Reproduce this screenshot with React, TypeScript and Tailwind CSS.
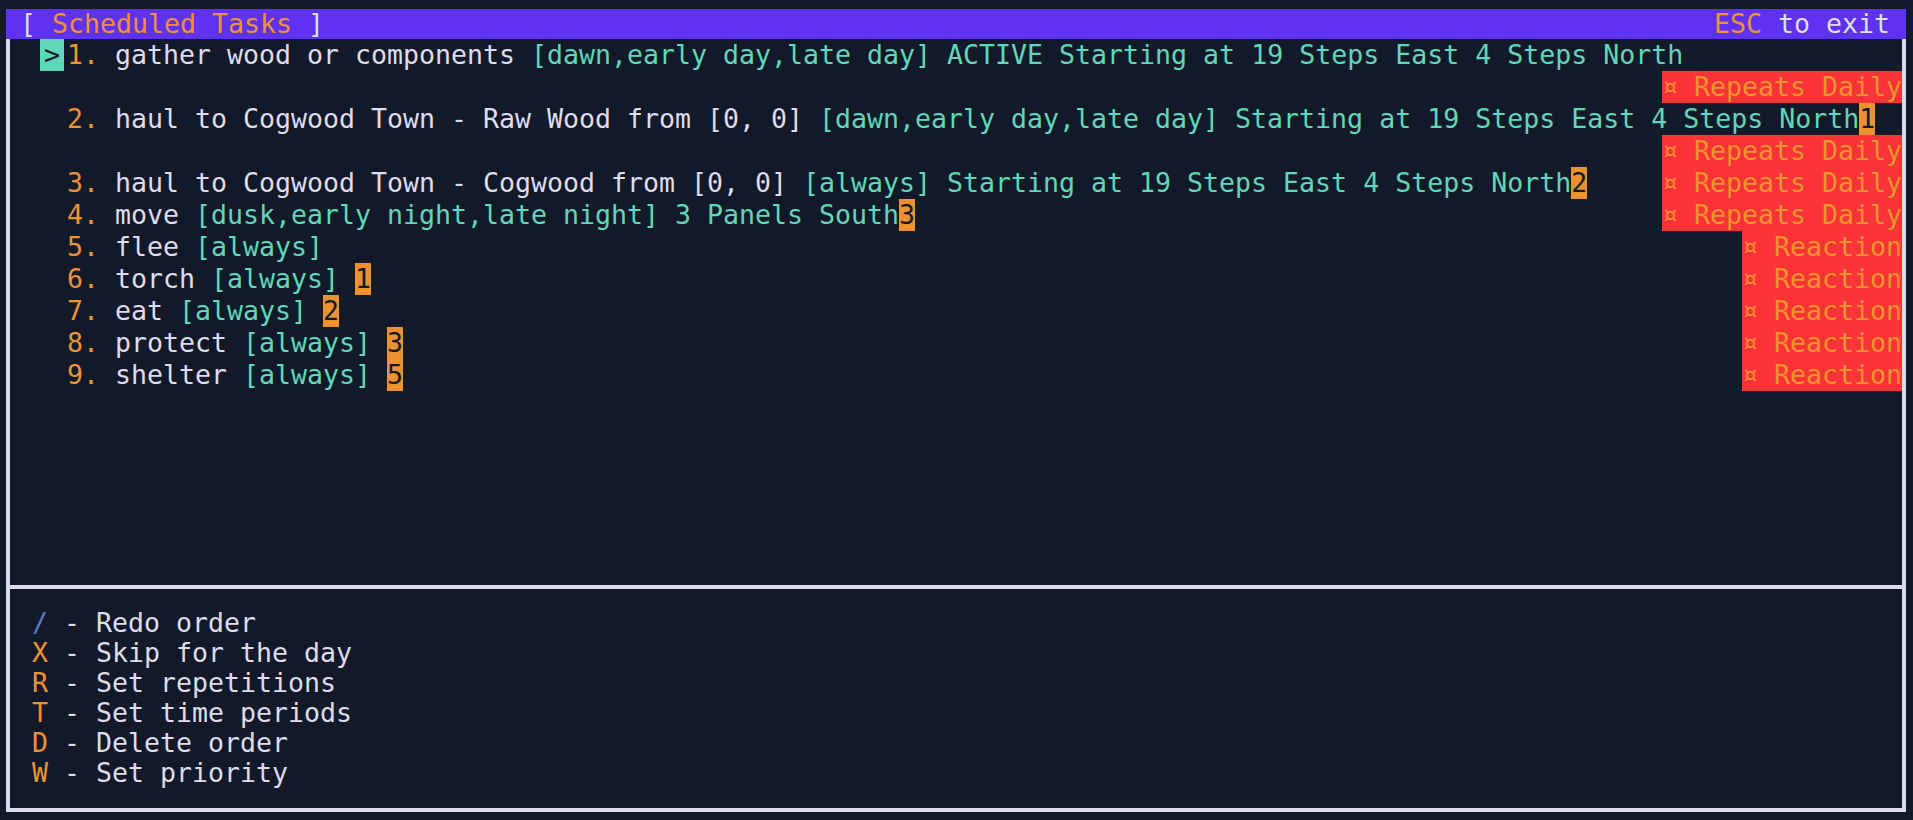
const FG = 'text-[#dedcef]'

function Num({ n }: { n: number }) {
  return <span className="text-[#f0922f]">{`${n}. `}</span>
}

function Teal({ children }: { children: React.ReactNode }) {
  return <span className="text-[#5ed8b9]">{children}</span>
}

function Badge({ n }: { n: number }) {
  return <span className="bg-[#ee9230] text-[#121a2a]">{n}</span>
}

function Tag({ label }: { label: string }) {
  return <span className="ml-auto bg-[#fc3438] text-[#f0922f]">{'¤ ' + label}</span>
}

function Row({ children, indent = true }: { children?: React.ReactNode; indent?: boolean }) {
  return (
    <div className={`flex h-[32px] leading-[32px] whitespace-pre ${indent ? 'pl-[57px]' : ''}`}>{children}</div>
  )
}

const tasks = [
  { n: 5, name: 'flee', badge: null as number | null },
  { n: 6, name: 'torch', badge: 1 },
  { n: 7, name: 'eat', badge: 2 },
  { n: 8, name: 'protect', badge: 3 },
  { n: 9, name: 'shelter', badge: 5 },
]

const keys = [
  { k: '/', label: 'Redo order', blue: true },
  { k: 'X', label: 'Skip for the day' },
  { k: 'R', label: 'Set repetitions' },
  { k: 'T', label: 'Set time periods' },
  { k: 'D', label: 'Delete order' },
  { k: 'W', label: 'Set priority' },
]

export default function App() {
  return (
    <div className={`w-[1913px] h-[820px] overflow-hidden bg-[#121a2a] pt-[9px] pl-[6px] font-['DejaVu_Sans_Mono',monospace] text-[26.58px] ${FG}`}>
      <div className="w-[1900px] flex flex-col">
        {/* title bar */}
        <div className="h-[30px] leading-[30px] bg-[#5e32f0] flex justify-between pl-[14px] pr-[16px] whitespace-pre">
          <span>
            [ <span className="text-[#f0922f]">Scheduled Tasks</span> ]
          </span>
          <span>
            <span className="text-[#f0922f]">ESC</span> to exit
          </span>
        </div>

        <div className="border-x-4 border-b-4 border-[#dcdbeb]">
          {/* task list */}
          <div className="h-[550px] border-b-4 border-[#dcdbeb]">
            <Row indent={false}>
              <span className="ml-[30px] mr-[3px] w-[24px] bg-[#5ed8b9] text-[#121a2a] text-center">{'>'}</span>
              <Num n={1} />
              <span>gather wood or components </span>
              <Teal>[dawn,early day,late day] ACTIVE Starting at 19 Steps East 4 Steps North</Teal>
            </Row>
            <Row>
              <Tag label="Repeats Daily" />
            </Row>
            <Row>
              <Num n={2} />
              <span>haul to Cogwood Town - Raw Wood from [0, 0] </span>
              <Teal>[dawn,early day,late day] Starting at 19 Steps East 4 Steps North</Teal>
              <Badge n={1} />
            </Row>
            <Row>
              <Tag label="Repeats Daily" />
            </Row>
            <Row>
              <Num n={3} />
              <span>haul to Cogwood Town - Cogwood from [0, 0] </span>
              <Teal>[always] Starting at 19 Steps East 4 Steps North</Teal>
              <Badge n={2} />
              <Tag label="Repeats Daily" />
            </Row>
            <Row>
              <Num n={4} />
              <span>move </span>
              <Teal>[dusk,early night,late night] 3 Panels South</Teal>
              <Badge n={3} />
              <Tag label="Repeats Daily" />
            </Row>
            {tasks.map((t) => (
              <Row key={t.n}>
                <Num n={t.n} />
                <span>{t.name} </span>
                <Teal>[always]</Teal>
                {t.badge !== null && (
                  <>
                    <span> </span>
                    <Badge n={t.badge} />
                  </>
                )}
                <Tag label="Reaction" />
              </Row>
            ))}
          </div>

          {/* key legend */}
          <div className="h-[219px] pt-[19px] pl-[22px]">
            {keys.map((k) => (
              <div key={k.k} className="h-[30px] leading-[30px] whitespace-pre">
                <span className={k.blue ? 'text-[#5b7dc1]' : 'text-[#f0922f]'}>{k.k}</span>
                {' - ' + k.label}
              </div>
            ))}
          </div>
        </div>
      </div>
    </div>
  )
}
